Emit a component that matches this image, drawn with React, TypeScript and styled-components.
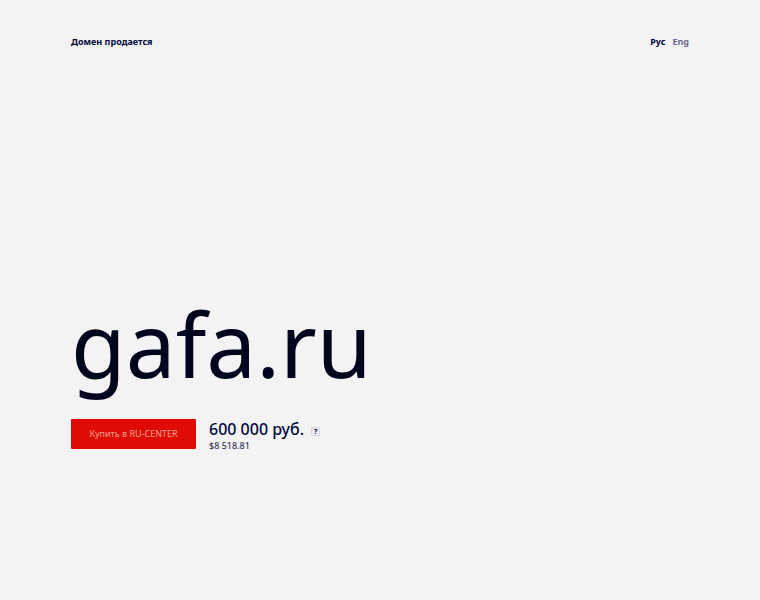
import React from 'react'
import styled, { createGlobalStyle } from 'styled-components'

const ink = '#00041c'
const navy = '#000a3c'
const red = '#de0c04'

export default function App() {
  return (
    <Page>
      <GlobalStyle />
      <Header>
        <Status>Домен продается</Status>
        <Languages>
          <Language href="#ru" $active>Рус</Language>
          <Language href="#en">Eng</Language>
        </Languages>
      </Header>
      <Main>
        <Domain>gafa.ru</Domain>
        <Offer>
          <BuyButton type="button">Купить в RU-CENTER</BuyButton>
          <Prices>
            <PriceRow>
              <Price>600 000 руб.</Price>
              <Hint type="button" aria-label="Подробнее о цене">?</Hint>
            </PriceRow>
            <Dollars>$8 518.81</Dollars>
          </Prices>
        </Offer>
      </Main>
    </Page>
  )
}

const GlobalStyle = createGlobalStyle`
  body {
    margin: 0;
    background: #f3f3f3;
    color: ${navy};
    font-family: 'Noto Sans', sans-serif;
  }

  button {
    font-family: inherit;
  }
`

const Page = styled.div`
  box-sizing: border-box;
  min-height: 100vh;
  padding: 35px 71px 147px;
  display: flex;
  flex-direction: column;
  justify-content: space-between;
`

const Header = styled.header`
  display: flex;
  justify-content: space-between;
  align-items: center;
  font-size: 9px;
  line-height: 14px;
`

const Status = styled.div`
  font-weight: 700;
`

const Languages = styled.nav`
  display: flex;
  gap: 7px;
`

const Language = styled.a<{ $active?: boolean }>`
  color: ${(props) => (props.$active ? navy : '#666b92')};
  font-weight: 700;
  text-decoration: none;
`

const Main = styled.main`
  display: flex;
  flex-direction: column;
`

const Domain = styled.h1`
  margin: 0 0 15px;
  color: ${ink};
  font-size: 89px;
  font-weight: 400;
  line-height: 120px;
`

const Offer = styled.div`
  display: flex;
  align-items: flex-start;
  gap: 13px;
`

const BuyButton = styled.button`
  width: 125px;
  height: 30px;
  padding: 0;
  border: 0;
  border-radius: 1px;
  background: ${red};
  color: #f9a391;
  font-size: 9px;
  line-height: 14px;
  cursor: pointer;
`

const Prices = styled.div`
  display: flex;
  flex-direction: column;
`

const PriceRow = styled.div`
  display: flex;
  align-items: center;
  gap: 7px;
`

const Price = styled.div`
  font-size: 16px;
  font-weight: 500;
  line-height: 20px;
`

const Hint = styled.button`
  width: 9px;
  height: 9px;
  padding: 0;
  margin-top: 5px;
  border: 1px solid #d8dae0;
  border-radius: 1px;
  background: #ececef;
  color: ${navy};
  font-size: 7px;
  font-weight: 700;
  line-height: 7px;
`

const Dollars = styled.div`
  color: #33395f;
  font-size: 9px;
  font-weight: 500;
  line-height: 14px;
`
